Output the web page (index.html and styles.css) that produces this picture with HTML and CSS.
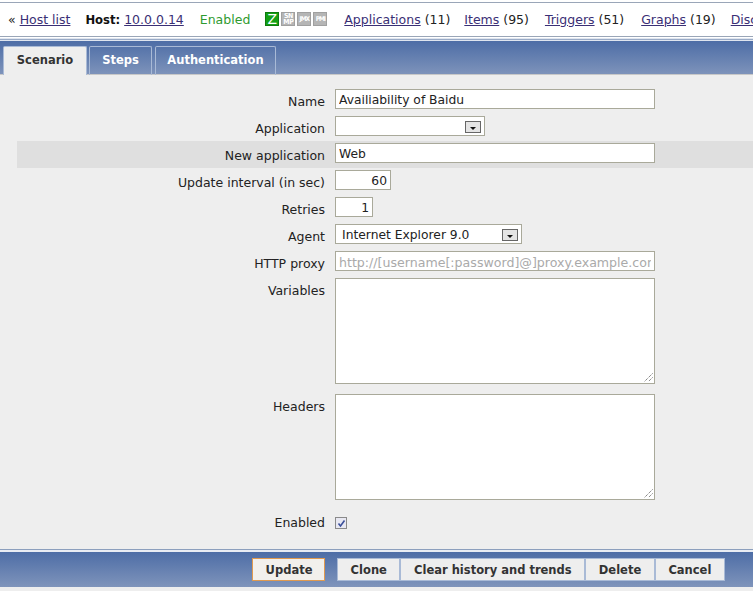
FILE: index.html
```html
<!DOCTYPE html>
<html lang="en">
<head>
<meta charset="utf-8">
<title>Scenario</title>
<link rel="stylesheet" href="styles.css">
</head>
<body>
<div class="page">
  <nav class="topnav">
    <span class="crumb">« <a href="#">Host list</a></span>
    <span><b>Host:</b> <a href="#">10.0.0.14</a></span>
    <span class="status">Enabled</span>
    <span class="avail">
      <span class="av av-z">Z</span>
      <span class="av av-off av-two">SN<br>MP</span>
      <span class="av av-off">JMX</span>
      <span class="av av-off">PMI</span>
    </span>
    <span class="nav-apps"><a href="#">Applications</a> (11)</span>
    <span class="nav-items"><a href="#">Items</a> (95)</span>
    <span class="nav-trig"><a href="#">Triggers</a> (51)</span>
    <span class="nav-graphs"><a href="#">Graphs</a> (19)</span>
    <span><a href="#">Discovery rules</a> (3)</span>
  </nav>
  <div class="tabbar">
    <a class="tab tab-active" href="#">Scenario</a>
    <a class="tab tab-steps" href="#">Steps</a>
    <a class="tab tab-auth" href="#">Authentication</a>
  </div>
  <form class="main">
    <div class="row"><label>Name</label><input class="f-wide" type="text" value="Availiability of Baidu"></div>
    <div class="row"><label>Application</label><div class="select f-app"><span></span><i class="arrow"></i></div></div>
    <div class="row row-hl"><label>New application</label><input class="f-wide" type="text" value="Web"></div>
    <div class="row"><label>Update interval (in sec)</label><input class="f-num f-56" type="text" value="60"></div>
    <div class="row"><label>Retries</label><input class="f-num f-38" type="text" value="1"></div>
    <div class="row"><label>Agent</label><div class="select f-agent"><span>Internet Explorer 9.0</span><i class="arrow"></i></div></div>
    <div class="row"><label>HTTP proxy</label><input class="f-wide f-ph" type="text" value="http://[username[:password]@]proxy.example.com"></div>
    <div class="row row-area"><label>Variables</label><div class="area"><svg class="grip" width="9" height="9" viewBox="0 0 9 9"><path d="M8.5 .5 .5 8.5M8.5 4.5 4.5 8.5" stroke="#555" fill="none" stroke-dasharray="1 1"/></svg></div></div>
    <div class="row row-area"><label>Headers</label><div class="area"><svg class="grip" width="9" height="9" viewBox="0 0 9 9"><path d="M8.5 .5 .5 8.5M8.5 4.5 4.5 8.5" stroke="#555" fill="none" stroke-dasharray="1 1"/></svg></div></div>
    <div class="row row-check"><label>Enabled</label><span class="check"><svg width="9" height="9" viewBox="0 0 9 9"><path d="M1.5 4.5 3.5 7 7.5 1.5" stroke="#3a4f9a" stroke-width="1.6" fill="none"/></svg></span></div>
  </form>
  <footer class="footer">
    <button class="btn btn-main" type="button">Update</button>
    <span class="btn-group">
      <button class="btn" type="button">Clone</button><button class="btn" type="button">Clear history and trends</button><button class="btn" type="button">Delete</button><button class="btn" type="button">Cancel</button>
    </span>
  </footer>
</div>
</body>
</html>
```
FILE: styles.css
```css
html, body { margin: 0; padding: 0; }
body {
  width: 753px; height: 591px; overflow: hidden;
  background: #eeeeee;
  font: 12.5px "DejaVu Sans", Verdana, sans-serif;
  color: #222;
}
.page { width: 753px; height: 591px; overflow: hidden; display: flex; flex-direction: column; }

.topnav {
  box-sizing: border-box; height: 37px; flex: none; background: #fff;
  border-bottom: 1px solid #9aa6b8;
  display: flex; align-items: center; gap: 15px;
  padding: 2px 0 0 8px; white-space: nowrap; color: #222;
  font-size: 12.5px;
  position: relative;
}
.topnav::before {
  content: ""; position: absolute; left: 0; right: 0; top: 2px; height: 1px; background: #9aa6b8;
}
.topnav a { color: #3a2f75; text-decoration: underline; }
.topnav b { color: #111; font-size: 11.6px; }
.status { color: #2f9a2f; margin-left: 1px; }
.nav-apps { margin-left: 2px; }
.nav-items { margin-left: -1px; }
.nav-trig { margin-left: 1px; }
.nav-graphs { margin-left: 2px; }
.avail { display: flex; gap: 2px; }
.av {
  box-sizing: border-box; width: 14px; height: 14px; display: block;
  text-align: center; color: #fff; font: bold 6.5px/12px "DejaVu Sans Condensed", "DejaVu Sans", sans-serif; letter-spacing: -1px;
  border: 1px solid #a0a0a0; background: #b5b5b5; overflow: hidden;
}
.av-z { background: #14a014; border-color: #0e7a0e; font: 14px/12px "DejaVu Sans", sans-serif; letter-spacing: 0; }
.av-two { line-height: 6px; font-size: 7px; letter-spacing: -.5px; }

.tabbar {
  box-sizing: border-box; height: 38px; flex: none;
  border-top: 1px solid #fff;
  background: linear-gradient(#dfe5ef 0 1px, #9aabc6 1px 2px, #dfe5ef 2px 3px, #4d6da6 3px, #7f94bb 37px);
  box-shadow: inset 0 -1px 0 #c8c8c8;
  display: flex; align-items: flex-end; padding: 0 0 0 3px;
}
.tab {
  box-sizing: border-box; height: 29px; text-align: center;
  border: 1px solid #a9bad6; border-bottom: 0; border-radius: 2px 2px 0 0;
  font: bold 11.5px/27px "DejaVu Sans", Verdana, sans-serif; color: #fff; text-decoration: none;
}
.tab-active { background: #eeeeee; color: #333; width: 84px; }
.tab-steps { width: 63px; margin-left: 2px; }
.tab-auth { width: 121px; margin-left: 3px; }

.main { flex: 1; box-sizing: border-box; padding: 12px 0 0 17px; }
.row { display: grid; grid-template-columns: 308px auto; column-gap: 10px; height: 27px; padding-top: 2px; box-sizing: border-box; justify-content: start; align-items: start; }
.row label { text-align: right; line-height: 20px; padding-top: 3px; color: #222; }
.row-hl { background: #dfdfdf; }
.row-area { height: 116px; }
.row-check { height: 27px; padding-top: 6px; }
.row-check label { padding-top: 1px; line-height: 16px; }

input, .select, .area {
  box-sizing: border-box; background: #fff; border: 1px solid #a9a99a;
  font: 12.3px "DejaVu Sans", Verdana, sans-serif; color: #222; margin: 0;
}
input { height: 20px; padding: 2px 3px 0; outline: none; }
.f-wide { width: 320px; }
.f-ph { color: #aaa; overflow: hidden; font-size: 12.6px; }
.f-num { text-align: right; }
.f-56 { width: 56px; }
.f-38 { width: 38px; }
.select { height: 20px; display: flex; align-items: center; justify-content: space-between; padding: 1px 3px 0 6px; white-space: nowrap; }
.f-app { width: 150px; }
.f-agent { width: 187px; }
.arrow {
  box-sizing: border-box; width: 16px; height: 12px; border: 1px solid #666; background: #e4e4e4; position: relative; display: block;
}
.arrow::after {
  content: ""; position: absolute; left: 4px; top: 5px;
  border-left: 3px solid transparent; border-right: 3px solid transparent; border-top: 3px solid #111;
}
.area { width: 320px; height: 106px; position: relative; }
.grip { position: absolute; right: 1px; bottom: 1px; }
.check { display: flex; align-items: center; justify-content: center; box-sizing: border-box; width: 12px; height: 12px; border: 1px solid #8a8a8a; background: #e8e8f2; margin-top: 3px; }

.footer {
  flex: none; box-sizing: border-box; height: 42px;
  border-top: 1px solid #8c9fbd;
  background: linear-gradient(#e8ecf3 0 2px, #4d6da6 2px, #7f94bb 37px, #eeeeee 37px);
  display: flex; align-items: flex-start; padding: 8px 0 0 252px; gap: 12px;
}
.btn-group { display: flex; }
.btn {
  box-sizing: border-box; height: 23px; background: #eeeeee; border: 1px solid #a9bad6;
  font: bold 11.5px "DejaVu Sans", Verdana, sans-serif; color: #333; padding: 1px 12.6px 0; margin: 0;
}
.btn-main { border-color: #e09a50; background: #f2f0ec; width: 73px; }
```
